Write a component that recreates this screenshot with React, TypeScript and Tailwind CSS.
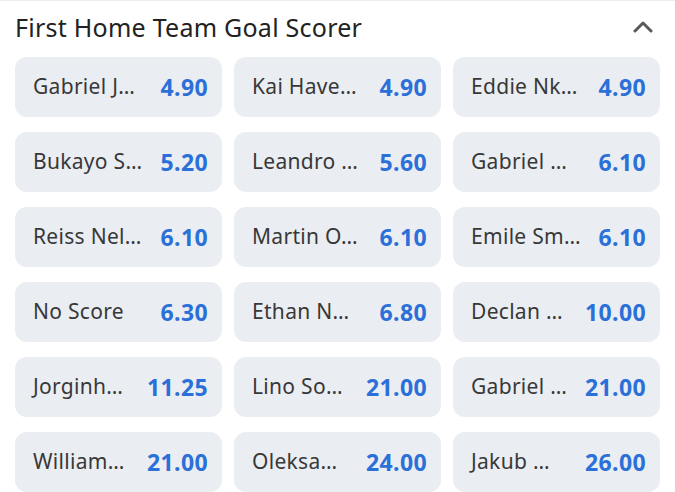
import React from "react";

const rows: [string, string][] = [
  ["Gabriel J…", "4.90"],
  ["Kai Have…", "4.90"],
  ["Eddie Nk…", "4.90"],
  ["Bukayo S…", "5.20"],
  ["Leandro …", "5.60"],
  ["Gabriel …", "6.10"],
  ["Reiss Nel…", "6.10"],
  ["Martin O…", "6.10"],
  ["Emile Sm…", "6.10"],
  ["No Score", "6.30"],
  ["Ethan N…", "6.80"],
  ["Declan …", "10.00"],
  ["Jorginh…", "11.25"],
  ["Lino So…", "21.00"],
  ["Gabriel …", "21.00"],
  ["William…", "21.00"],
  ["Oleksa…", "24.00"],
  ["Jakub …", "26.00"],
];

export default function App() {
  return (
    <div
      className="w-[675px] h-[492px] bg-white overflow-hidden border-t border-[#ececec]"
      style={{ fontFamily: '"Noto Sans", "Open Sans", sans-serif' }}
    >
      <div className="h-[56px] flex items-center justify-between pl-[15px] pr-[22px]">
        <div className="text-[25px] tracking-[0.25px] text-[#222] leading-none pb-[4px]">
          First Home Team Goal Scorer
        </div>
        <svg width="20" height="14" viewBox="0 0 20 14" className="mb-[4px]">
          <path d="M2 11 L10 3 L18 11" fill="none" stroke="#5a5a5a" strokeWidth="3" strokeLinecap="round" strokeLinejoin="round" />
        </svg>
      </div>
      <div className="grid grid-cols-3 gap-x-3 gap-y-[15px] pl-[15px] pr-[15px]">
        {rows.map(([name, odds], i) => (
          <div
            key={i}
            className="h-[60px] rounded-[12px] bg-[#eaedf1] flex items-center justify-between pl-[18px] pr-[14px]"
          >
            <span className="text-[21px] tracking-[0.3px] text-[#383838] whitespace-nowrap">{name}</span>
            <span className="text-[23px] font-bold tracking-[0.4px] text-[#2b70d8] whitespace-nowrap">{odds}</span>
          </div>
        ))}
      </div>
    </div>
  );
}
